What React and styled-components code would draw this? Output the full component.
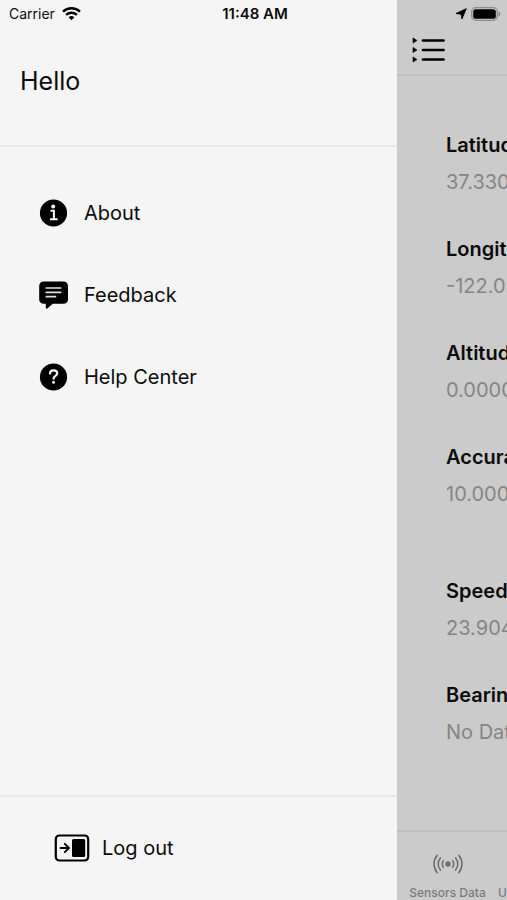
import React from "react";
import styled, { createGlobalStyle } from "styled-components";

const GlobalStyle = createGlobalStyle`
  * {
    box-sizing: border-box;
  }

  body {
    margin: 0;
    color: #0c0c0c;
    font-family: Inter, "Liberation Sans", sans-serif;
  }
`;

const Page = styled.div`
  position: relative;
  display: flex;
  min-height: 100vh;
  overflow: hidden;
  background: #cbcbcb;
`;

const StatusBar = styled.div`
  position: absolute;
  top: 0;
  left: 0;
  right: 0;
  z-index: 1;
  display: grid;
  grid-template-columns: 1fr auto 1fr;
  align-items: center;
  height: 28px;
  padding: 0 6px 0 9px;
  font-size: 14px;
  line-height: 20px;
`;

const StatusGroup = styled.div`
  display: flex;
  align-items: center;
  justify-content: ${({ $end }) => ($end ? "flex-end" : "flex-start")};
  gap: ${({ $end }) => ($end ? "4px" : "7px")};
`;

const Clock = styled.time`
  font-size: 15px;
  font-weight: 600;
`;

const Drawer = styled.aside`
  display: flex;
  flex-direction: column;
  flex: 0 0 397px;
  background: #f5f5f5;
`;

const DrawerHeader = styled.header`
  display: flex;
  align-items: center;
  height: 147px;
  padding: 17px 20px 0;
  border-bottom: 2px solid #e8e8e8;
`;

const Greeting = styled.h1`
  margin: 0;
  font-size: 25px;
  font-weight: 400;
  line-height: 32px;
`;

const DrawerNav = styled.nav`
  flex: 1;
  padding: 25px 38px;
`;

const DrawerLink = styled.a`
  display: flex;
  align-items: center;
  gap: 15px;
  height: 82px;
  color: inherit;
  font-size: 20px;
  line-height: 28px;
  text-decoration: none;
`;

const DrawerFooter = styled.footer`
  display: flex;
  align-items: center;
  height: 105px;
  padding: 0 54px 2px;
  border-top: 2px solid #e8e8e8;
`;

const LogoutButton = styled.button`
  display: flex;
  align-items: center;
  gap: 12px;
  padding: 0;
  border: 0;
  background: none;
  color: inherit;
  font: inherit;
  font-size: 20px;
  line-height: 28px;
`;

const Screen = styled.div`
  display: flex;
  flex-direction: column;
  flex: 1;
  min-width: 0;
  overflow: hidden;
`;

const TopBar = styled.header`
  height: 76px;
  padding: 37px 15px 0;
  border-bottom: 2px solid #c0c0c0;
`;

const MenuButton = styled.button`
  display: block;
  padding: 0;
  border: 0;
  background: none;
  color: inherit;
`;

const Readings = styled.main`
  display: flex;
  flex-direction: column;
  flex: 1;
  gap: 60px;
  padding: 51px 0 0 49px;
  white-space: nowrap;
`;

const ReadingGroup = styled.dl`
  display: flex;
  flex-direction: column;
  gap: 30px;
  margin: 0;
`;

const Label = styled.dt`
  font-size: 20px;
  font-weight: 600;
  line-height: 37px;
`;

const Value = styled.dd`
  margin: 0;
  color: #858585;
  font-size: 20px;
  line-height: 37px;
`;

const TabBar = styled.nav`
  display: flex;
  height: 70px;
  border-top: 2px solid #bdbdbd;
`;

const Tab = styled.a`
  display: flex;
  flex-direction: column;
  align-items: center;
  flex: 0 0 101px;
  gap: 11px;
  padding-top: 21px;
  color: #7c7c7c;
  font-size: 12px;
  font-weight: 500;
  line-height: 14px;
  text-decoration: none;
  white-space: nowrap;
`;

const WifiIcon = () => (
  <svg width="19" height="14" viewBox="0 0 19 14" fill="none" stroke="#000" strokeWidth="2.4">
    <path d="M1 4.6C5.8.1 13.2.1 18 4.6" />
    <path d="M4.100 7.800c3.100-2.800 7.700-2.800 10.800 0" />
    <path d="M9.500 13.200 6.600 10.300a4.200 4.200 0 0 1 5.800 0z" fill="#000" stroke="none" />
  </svg>
);

const LocationIcon = () => (
  <svg width="12" height="12" viewBox="0 0 12 12">
    <path d="M11.300.7 6.900 11 6.200 6.200 1 5.500z" fill="#000" stroke="#000" strokeWidth=".9" strokeLinejoin="round" />
  </svg>
);

const BatteryIcon = () => (
  <svg width="30" height="14" viewBox="0 0 30 14">
    <rect x="0.7" y="0.7" width="25.600" height="12.600" rx="4" fill="none" stroke="#8c8c8c" strokeWidth="1.300" />
    <rect x="2.200" y="2.200" width="22.600" height="9.600" rx="2.600" fill="#000" />
    <path d="M27.500 4.500c2.600.6 2.600 4.400 0 5z" fill="#8c8c8c" />
  </svg>
);

const MenuIcon = () => (
  <svg width="34" height="26" viewBox="0 0 34 26">
    {[3.5, 13, 22.5].map((y) => (
      <g key={y} transform={`translate(0 ${y})`}>
        <path d="M1-2.600 5 0 1 2.600z" fill="#000" stroke="#000" strokeLinejoin="round" strokeWidth=".6" />
        <path d="M11 0h20.500" stroke="#000" strokeWidth="2.700" strokeLinecap="round" />
      </g>
    ))}
  </svg>
);

const InfoIcon = () => (
  <svg width="31" height="30" viewBox="0 0 31 30">
    <circle cx="15.500" cy="15" r="13.600" fill="#000" />
    <circle cx="15.200" cy="8.500" r="2" fill="#f5f5f5" />
    <path d="M12.500 12.800h3.400v8M12 21.300h7.600" fill="none" stroke="#f5f5f5" strokeWidth="2" />
  </svg>
);

const FeedbackIcon = () => (
  <svg width="31" height="30" viewBox="0 0 31 30">
    <path
      d="M5.600 1.500h20a4.400 4.400 0 0 1 4.400 4.400v13.500a4.400 4.400 0 0 1-4.400 4.400H14.800l-5.600 4.600c-.8.7-1.400.3-1.400-.6v-4H5.600a4.400 4.400 0 0 1-4.400-4.400V5.900a4.400 4.400 0 0 1 4.400-4.400z"
      fill="#000"
    />
    <path d="M8.300 8h14.400M8.300 12.300h14.400M8.300 16.700h9.200" stroke="#e0e0e0" strokeWidth="1.700" strokeLinecap="round" />
  </svg>
);

const HelpIcon = () => (
  <svg width="31" height="30" viewBox="0 0 31 30">
    <circle cx="15.500" cy="15" r="13.600" fill="#000" />
    <path
      d="M12 11.600c0-2 1.400-3.200 3.600-3.200s3.600 1.100 3.600 2.900c0 1.400-.9 2.100-2 2.800-1.100.7-1.600 1.200-1.600 2.300v.3"
      fill="none"
      stroke="#f5f5f5"
      strokeWidth="2.200"
      strokeLinecap="round"
    />
    <circle cx="15.500" cy="20.300" r="1.500" fill="#f5f5f5" />
  </svg>
);

const LogoutIcon = () => (
  <svg width="36" height="28" viewBox="0 0 36 28">
    <rect x="1.800" y="1.500" width="32.400" height="25" rx="3.500" fill="none" stroke="#000" strokeWidth="2.200" />
    <rect x="18" y="5" width="13.200" height="18" rx="1.500" fill="#000" />
    <path d="M6.500 14h8M10.800 9.800l4.200 4.200-4.200 4.200" fill="none" stroke="#000" strokeWidth="1.800" strokeLinecap="round" strokeLinejoin="round" />
  </svg>
);

const SensorsIcon = () => (
  <svg width="30" height="22" viewBox="0 0 30 22" fill="none" stroke="#6b6b6b" strokeWidth="1.500" strokeLinecap="round">
    <circle cx="15" cy="11" r="2.700" fill="#6b6b6b" stroke="none" />
    <path d="M10.400 7.700c-1.400 2-1.400 4.600 0 6.600M7.400 4.900c-3 3.600-3 8.600 0 12.200M4.200 2.300c-4.200 5.200-4.200 12.200 0 17.400" />
    <path d="M19.600 7.700c1.400 2 1.400 4.600 0 6.600M22.600 4.900c3 3.600 3 8.600 0 12.200M25.800 2.300c4.200 5.200 4.200 12.200 0 17.400" />
  </svg>
);

const links = [
  { label: "About", Icon: InfoIcon },
  { label: "Feedback", Icon: FeedbackIcon },
  { label: "Help Center", Icon: HelpIcon },
];

const readings = [
  [
    ["Latitude", "37.3302"],
    ["Longitude", "-122.02"],
    ["Altitude", "0.0000"],
    ["Accuracy", "10.0000"],
  ],
  [
    ["Speed", "23.904"],
    ["Bearing", "No Data"],
  ],
];

const App = () => (
  <>
    <GlobalStyle />
    <Page>
      <StatusBar>
        <StatusGroup>
          <span>Carrier</span>
          <WifiIcon />
        </StatusGroup>
        <Clock>11:48 AM</Clock>
        <StatusGroup $end>
          <LocationIcon />
          <BatteryIcon />
        </StatusGroup>
      </StatusBar>
      <Drawer>
        <DrawerHeader>
          <Greeting>Hello</Greeting>
        </DrawerHeader>
        <DrawerNav>
          {links.map(({ label, Icon }) => (
            <DrawerLink key={label} href="#">
              <Icon />
              {label}
            </DrawerLink>
          ))}
        </DrawerNav>
        <DrawerFooter>
          <LogoutButton type="button">
            <LogoutIcon />
            Log out
          </LogoutButton>
        </DrawerFooter>
      </Drawer>
      <Screen>
        <TopBar>
          <MenuButton type="button" aria-label="Menu">
            <MenuIcon />
          </MenuButton>
        </TopBar>
        <Readings>
          {readings.map((group, i) => (
            <ReadingGroup key={i}>
              {group.map(([label, value]) => (
                <div key={label}>
                  <Label>{label}</Label>
                  <Value>{value}</Value>
                </div>
              ))}
            </ReadingGroup>
          ))}
        </Readings>
        <TabBar>
          <Tab href="#">
            <SensorsIcon />
            Sensors Data
          </Tab>
          <Tab href="#">
            <SensorsIcon />
            Uploaded Sensors
          </Tab>
        </TabBar>
      </Screen>
    </Page>
  </>
);

export default App;
